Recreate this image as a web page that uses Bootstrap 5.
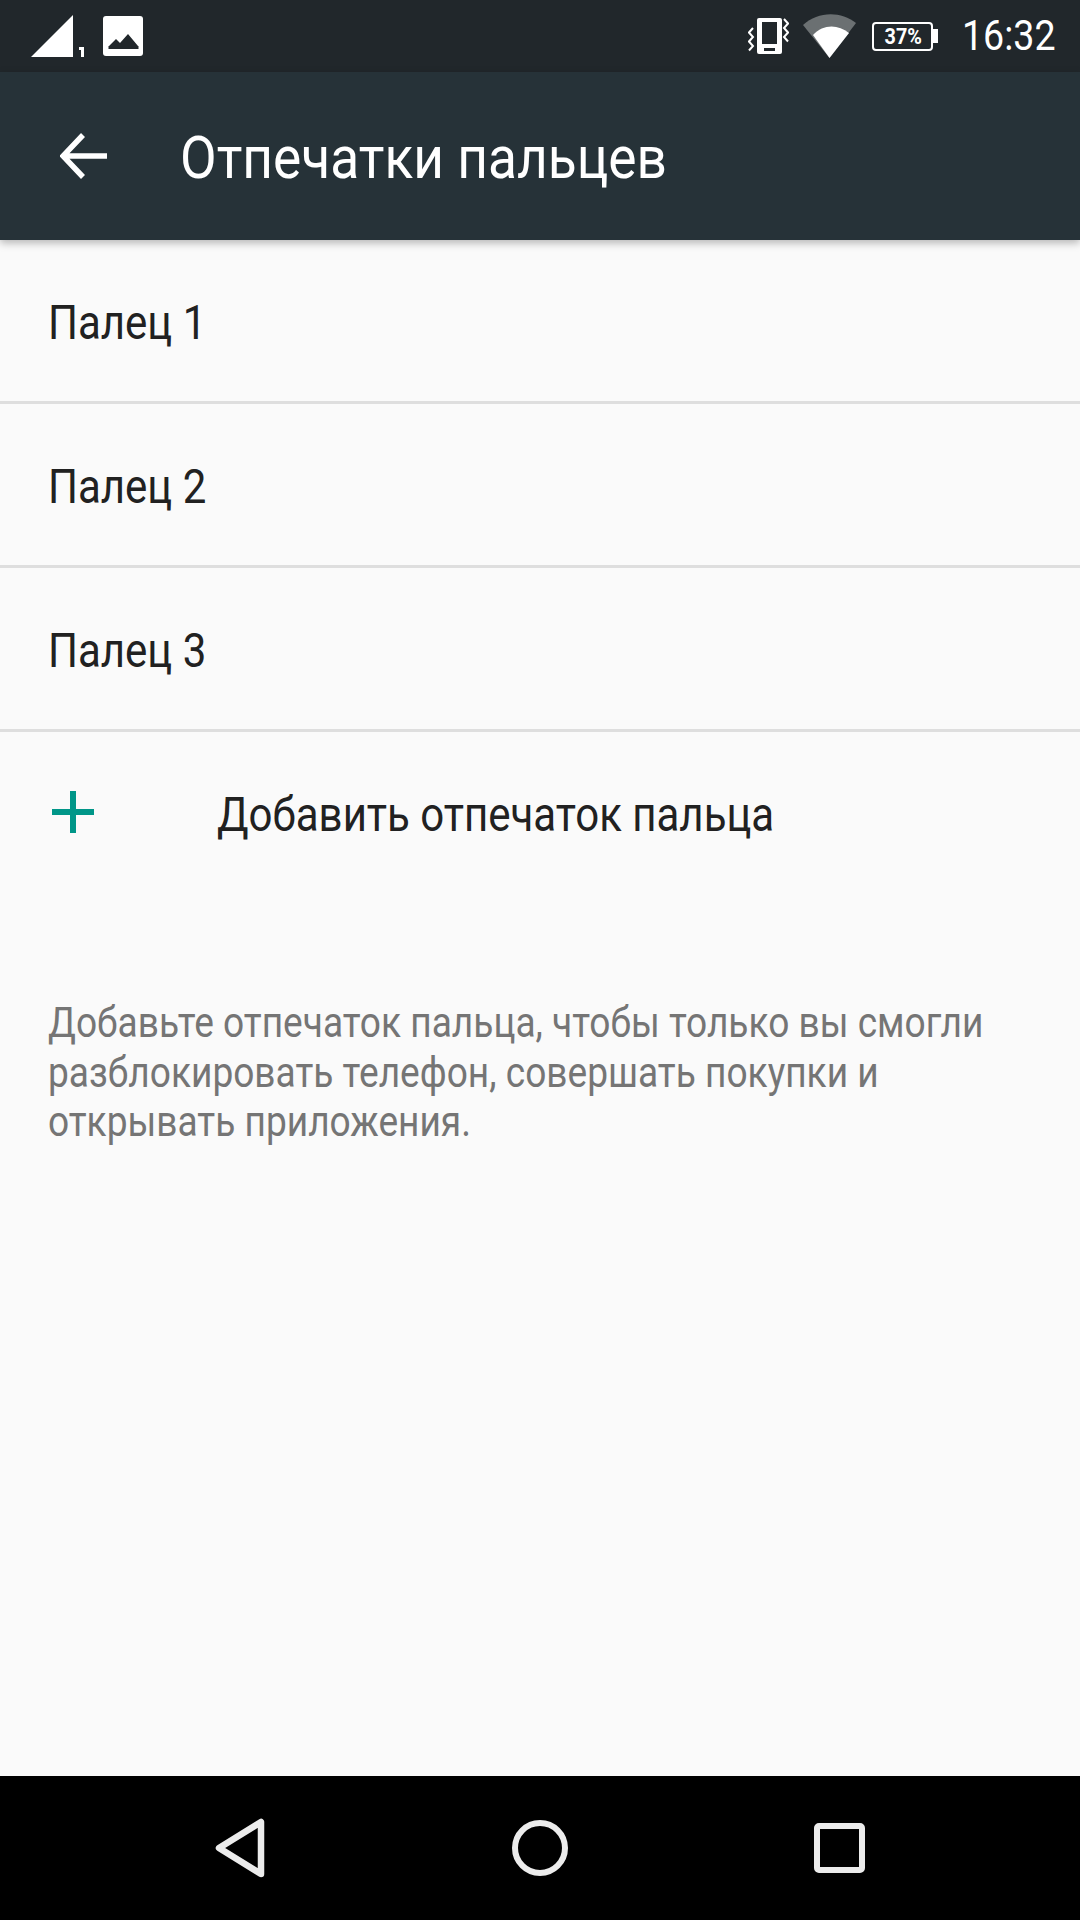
<!DOCTYPE html>
<html lang="ru"><head><meta charset="utf-8">
<link href="https://cdn.jsdelivr.net/npm/bootstrap@5.3.0/dist/css/bootstrap.min.css" rel="stylesheet">
<style>
html,body{height:1920px;overflow:hidden;background:#fafafa;}
body{font-family:Roboto,"Noto Sans",sans-serif;}
.phone{height:1920px;}
.sq{display:inline-block;transform:scaleX(.885);transform-origin:left center;white-space:nowrap;}
.sbar{height:72px;background:#21272b;color:#fff;padding:0 24px 0 31px;}
.sclock{font-size:42px;line-height:1;transform:scaleX(.895);transform-origin:right center;margin-left:13px;}
.ic-img{margin-left:18px;}
.ic-wifi{margin-left:14px;}
.ic-batt{margin-left:16px;}
.abar{height:168px;background:#263238;color:#fff;box-shadow:0 3px 8px rgba(0,0,0,.28);position:relative;z-index:2;padding-left:60px;}
.atitle{font-size:60px;margin-left:72px;line-height:1;padding-top:4px;transform:scaleX(.888);}
.frow{height:164px;border-bottom:3px solid #dedede;padding:4px 0 0 48px;font-size:48px;color:#212121;}
.frow .sq,.addtxt{transform:scaleX(.875);}
.addrow{height:168px;padding-left:52px;font-size:48px;color:#212121;}
.addrow svg{margin-bottom:8px;}
.addtxt{margin-left:123px;margin-bottom:2px;}
.hint{padding:98px 0 0 48px;font-size:42px;line-height:49.5px;color:#757575;}
.hint .sq{display:block;transform:scaleX(.883);}
.nbar{height:144px;background:#000;}
</style></head><body>
<div class="phone d-flex flex-column">
<div class="sbar d-flex align-items-center">
<svg width="54" height="42" viewBox="0 0 54 42"><path d="M0 42 42 0V42Z" fill="#fff"/><path d="M48 32h5v10h-3V35h-2z" fill="#fff"/></svg>
<svg class="ic-img" width="40" height="40" viewBox="0 0 40 40"><rect width="40" height="40" rx="3" fill="#fff"/><path d="M6 30 13 23l4 4 8-9 10 12z" fill="#21272b"/><rect x="5.500" y="30" width="30" height="3" fill="#21272b"/></svg>
<div class="flex-grow-1"></div>
<svg width="41" height="36" viewBox="0 0 41 36"><rect x="9" y="0" width="25" height="36" rx="2" fill="#fff"/><rect x="14" y="4" width="15" height="22" fill="#21272b"/><rect x="16" y="30" width="11" height="3" fill="#21272b"/><path d="M5 10 1 14.500l4 4.500-4 4.500 4 4.500-4 4.500" fill="none" stroke="#fff" stroke-width="2"/><path d="M36 1l4 4.500-4 4.500 4 4.500-4 4.500 4 4.500" fill="none" stroke="#fff" stroke-width="2"/></svg>
<svg class="ic-wifi" width="53" height="44" viewBox="0 0 53 44"><path d="M0 11C15-3 38-3 53 9L26.500 44Z" fill="#6b7072"/><path d="M10 21C20 10 35 10 46 19L26.500 44Z" fill="#fff"/></svg>
<svg class="ic-batt" width="66" height="29" viewBox="0 0 66 29"><rect x="1" y="1" width="59" height="27" rx="3" fill="none" stroke="#fff" stroke-width="2"/><path d="M61 7h5v14h-5z" fill="#fff"/><text x="14" y="22" transform="scale(.9 1)" font-family="Roboto,sans-serif" font-size="22" font-weight="700" fill="#fff">37%</text></svg>
<span class="sclock sq">16:32</span>
</div>
<div class="abar d-flex align-items-center">
<svg width="48" height="48" viewBox="0 0 48 48"><path d="M47 24H3M23 3 3 24l20 21" fill="none" stroke="#fff" stroke-width="5.500"/></svg>
<span class="atitle sq">Отпечатки пальцев</span>
</div>
<div class="flex-grow-1">
<div class="frow d-flex align-items-center"><span class="sq">Палец 1</span></div>
<div class="frow d-flex align-items-center"><span class="sq">Палец 2</span></div>
<div class="frow d-flex align-items-center"><span class="sq">Палец 3</span></div>
<div class="addrow d-flex align-items-center">
<svg width="42" height="42" viewBox="0 0 42 42"><path d="M21 0v42M0 21h42" stroke="#009688" stroke-width="6"/></svg>
<span class="addtxt sq">Добавить отпечаток пальца</span>
</div>
<div class="hint"><span class="sq">Добавьте отпечаток пальца, чтобы только вы смогли</span><span class="sq">разблокировать телефон, совершать покупки и</span><span class="sq">открывать приложения.</span></div>
</div>
<div class="nbar d-flex align-items-center">
<svg width="1080" height="144" viewBox="0 0 1080 144"><path d="M261 46V98L219 72Z" fill="none" stroke="#ececec" stroke-width="6.500" stroke-linejoin="round"/><circle cx="540" cy="72" r="25" fill="none" stroke="#ececec" stroke-width="6"/><rect x="817" y="50" width="45" height="44" rx="2" fill="none" stroke="#ececec" stroke-width="6"/></svg>
</div>
</div>
</body></html>
